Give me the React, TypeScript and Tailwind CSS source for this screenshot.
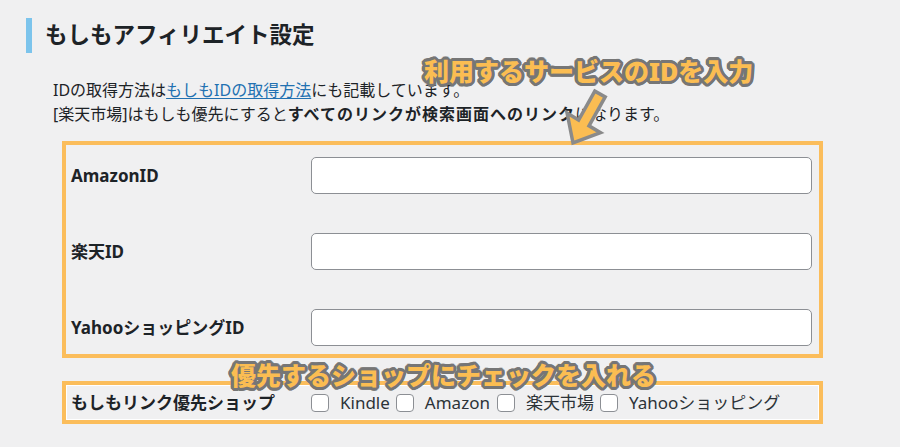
import React from "react";

const outline =
  "[text-shadow:3px_0_0_#767676,-3px_0_0_#767676,0_3px_0_#767676,0_-3px_0_#767676,2px_2px_0_#767676,-2px_2px_0_#767676,2px_-2px_0_#767676,-2px_-2px_0_#767676,3px_1px_0_#767676,3px_-1px_0_#767676,-3px_1px_0_#767676,-3px_-1px_0_#767676,1px_3px_0_#767676,-1px_3px_0_#767676,1px_-3px_0_#767676,-1px_-3px_0_#767676]";

function Row({ label, last }: { label: string; last?: boolean }) {
  return (
    <div className={`flex items-center ${last ? "" : "mb-[39px]"}`}>
      <div className="w-[240px] shrink-0 text-[17px] font-bold text-[#1d2327]">{label}</div>
      <div className="flex-1 h-[37px] bg-white border border-[#8c8f94] rounded-[5px]" />
    </div>
  );
}

function Check({ label, gapAfter }: { label: string; gapAfter: string }) {
  return (
    <div className={`flex items-center ${gapAfter}`}>
      <div className="w-[18px] h-[18px] bg-white border border-[#8c8f94] rounded-[4px] mr-[11px]" />
      <span className="text-[17px] text-[#2c3338]">{label}</span>
    </div>
  );
}

export default function App() {
  return (
    <div
      className="relative w-[900px] h-[447px] overflow-hidden bg-[#f0f0f1] text-[#1d2327]"
      style={{ fontFamily: '"Noto Sans", "Noto Sans CJK JP", sans-serif' }}
    >
      {/* Heading */}
      <div className="flex items-center pt-[18px] pl-[26px] h-[53px]">
        <div className="w-[6px] h-[35px] bg-[#7cc4ec]" />
        <h2 className="ml-[13px] text-[22.5px] font-bold leading-none text-[#1d2327]">
          もしもアフィリエイト設定
        </h2>
      </div>

      {/* Description */}
      <div className="pl-[53px] mt-[25px] text-[16px] leading-[24px]">
        <p>
          IDの取得方法は
          <a className="text-[#2271b1] underline underline-offset-2">もしもIDの取得方法</a>
          にも記載しています。
        </p>
        <p>
          [楽天市場]はもしも優先にすると
          <b className="font-bold tracking-[1px]">すべてのリンクが検索画面へのリンク</b>
          になります。
        </p>
      </div>

      {/* ID box */}
      <div className="ml-[62px] mt-[15px] w-[761px] h-[217px] border-[4px] border-[#fbbd5b] pl-[5px] pr-[7px] pt-[12px]">
        <Row label="AmazonID" />
        <Row label="楽天ID" />
        <Row label="YahooショッピングID" last />
      </div>

      {/* Priority box */}
      <div className="ml-[62px] mt-[23px] w-[761px] h-[43px] border-[4px] border-[#fbbd5b]">
        <div className="h-full border border-white flex items-center pl-[4px]">
          <div className="w-[240px] shrink-0 text-[17px] font-bold">もしもリンク優先ショップ</div>
          <Check label="Kindle" gapAfter="mr-[6px]" />
          <Check label="Amazon" gapAfter="mr-[7px]" />
          <Check label="楽天市場" gapAfter="mr-[6px]" />
          <Check label="Yahooショッピング" gapAfter="" />
        </div>
      </div>

      {/* Annotations */}
      <div
        className={`absolute left-[424px] top-[59px] text-[25px] leading-none font-black text-[#fbbd52] whitespace-nowrap ${outline}`}
      >
        利用するサービスのIDを入力
      </div>
      <svg className="absolute left-0 top-0" width="900" height="447" viewBox="0 0 900 447">
        <polygon
          points="594.8,91.1 605.2,96.9 589,125.8 600.5,132.7 573,143 567.1,113.1 578.6,120"
          fill="#fbbd52"
          stroke="#8a8a8a"
          strokeWidth="3.5"
          strokeLinejoin="miter"
        />
      </svg>
      <div
        className={`absolute left-[231px] top-[363px] text-[25px] leading-none font-black text-[#fbbd52] whitespace-nowrap ${outline}`}
      >
        優先するショップにチェックを入れる
      </div>
    </div>
  );
}
